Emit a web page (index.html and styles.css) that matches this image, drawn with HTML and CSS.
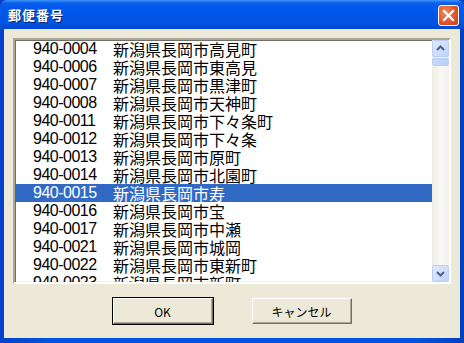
FILE: index.html
```html
<!DOCTYPE html>
<html lang="ja">
<head>
    <meta charset="UTF-8">
    <title>郵便番号</title>
    <link rel="stylesheet" href="styles.css">
</head>
<body>

<div class="window">
    <div class="titlebar">
        <span class="title">郵便番号</span>
        <span class="close-btn">
            <svg width="21" height="21" viewBox="0 0 21 21">
                <path d="M6 6 L15 15 M15 6 L6 15" stroke="#fff" stroke-width="2.2" stroke-linecap="square"/>
            </svg>
        </span>
    </div>

    <div class="client">
        <div class="listbox">
            <div class="items">
                <div class="item"><span class="code">940-0004</span><span class="addr">新潟県長岡市高見町</span></div>
                <div class="item"><span class="code">940-0006</span><span class="addr">新潟県長岡市東高見</span></div>
                <div class="item"><span class="code">940-0007</span><span class="addr">新潟県長岡市黒津町</span></div>
                <div class="item"><span class="code">940-0008</span><span class="addr">新潟県長岡市天神町</span></div>
                <div class="item"><span class="code">940-0011</span><span class="addr">新潟県長岡市下々条町</span></div>
                <div class="item"><span class="code">940-0012</span><span class="addr">新潟県長岡市下々条</span></div>
                <div class="item"><span class="code">940-0013</span><span class="addr">新潟県長岡市原町</span></div>
                <div class="item"><span class="code">940-0014</span><span class="addr">新潟県長岡市北園町</span></div>
                <div class="item selected"><span class="code">940-0015</span><span class="addr">新潟県長岡市寿</span></div>
                <div class="item"><span class="code">940-0016</span><span class="addr">新潟県長岡市宝</span></div>
                <div class="item"><span class="code">940-0017</span><span class="addr">新潟県長岡市中瀬</span></div>
                <div class="item"><span class="code">940-0021</span><span class="addr">新潟県長岡市城岡</span></div>
                <div class="item"><span class="code">940-0022</span><span class="addr">新潟県長岡市東新町</span></div>
                <div class="item"><span class="code">940-0023</span><span class="addr">新潟県長岡市新町</span></div>
            </div>
            <div class="scrollbar">
                <div class="sb-btn">
                    <svg width="15" height="15" viewBox="0 0 15 15">
                        <path d="M4 9 L7.5 5.5 L11 9" fill="none" stroke="#4d6185" stroke-width="2"/>
                    </svg>
                </div>
                <div class="sb-thumb"></div>
                <div class="sb-track"></div>
                <div class="sb-btn">
                    <svg width="15" height="15" viewBox="0 0 15 15">
                        <path d="M4 6 L7.5 9.5 L11 6" fill="none" stroke="#4d6185" stroke-width="2"/>
                    </svg>
                </div>
            </div>
        </div>

        <div class="buttons">
            <button class="btn default">OK</button>
            <button class="btn">キャンセル</button>
        </div>
    </div>
</div>

</body>
</html>
```

FILE: styles.css
```css
body {
    margin: 0;
    padding: 0;
    background-color: #0054e3;
    font-family: "Noto Sans CJK JP", "Liberation Sans", sans-serif;
}
.window {
    width: 464px;
    height: 343px;
    display: flex;
    flex-direction: column;
    background: linear-gradient(to right, #0840c8, #0054e3 10%, #0054e3 90%, #0040c0);
}
.titlebar {
    height: 29px;
    display: flex;
    align-items: center;
    justify-content: space-between;
    padding: 0 5px 0 8px;
    background: linear-gradient(to bottom, #3d95ff 0, #0a5ee8 3px, #0058ee 8px, #0054e3 22px, #0048d0 29px);
    border-radius: 7px 7px 0 0;
}
.title {
    color: white;
    font-size: 13px;
    font-weight: bold;
    text-shadow: 1px 1px 0 #0a1e6e;
    letter-spacing: 1px;
}
.close-btn {
    width: 21px;
    height: 21px;
    border: 1px solid white;
    border-radius: 3px;
    background: radial-gradient(circle at 35% 35%, #f08a60, #e0522a 60%, #c2391a);
    display: flex;
    box-sizing: border-box;
    align-items: center;
    justify-content: center;
    margin-top: 1px;
}
.close-btn svg {
    flex: none;
}
.client {
    flex: 1;
    margin: 0 4px 5px 4px;
    padding: 9px 9px 0 9px;
    background-color: #ece9d8;
}
.listbox {
    height: 246px;
    box-sizing: border-box;
    display: flex;
    border-style: solid;
    border-width: 2px;
    border-color: #aca899 #fff #fff #aca899;
    box-shadow: inset 1px 1px 0 #716f64, inset -1px -1px 0 #f1efe2;
    background-color: white;
}
.items {
    flex: 1;
    overflow: hidden;
}
.item {
    height: 18px;
    display: flex;
    align-items: center;
    padding-left: 18px;
    color: black;
    font-size: 16px;
    white-space: nowrap;
}
.item.selected {
    background-color: #316ac5;
    color: white;
}
.code {
    width: 80px;
    font-family: "Liberation Sans", sans-serif;
    letter-spacing: -0.5px;
}
.addr {
    font-family: "Noto Sans CJK JP", sans-serif;
    line-height: 18px;
}
.scrollbar {
    width: 17px;
    display: flex;
    flex-direction: column;
    background: linear-gradient(to right, #eeede5, #f8f8f4 50%, #f3f1ec);
}
.sb-btn {
    height: 17px;
    box-sizing: border-box;
    border: 1px solid #b9cdf5;
    border-radius: 2px;
    background: linear-gradient(to bottom right, #e0eafd, #c1d3fb);
    display: flex;
    align-items: center;
    justify-content: center;
}
.sb-thumb {
    height: 8px;
    margin-top: 1px;
    box-sizing: border-box;
    border: 1px solid #b9cdf5;
    border-radius: 2px;
    background: linear-gradient(to right, #c8d7fc, #bccffa);
}
.sb-track {
    flex: 1;
}
.buttons {
    display: flex;
    justify-content: center;
    gap: 39px;
    margin-top: 14px;
}
.btn {
    width: 100px;
    height: 26px;
    font-family: "Noto Sans CJK JP", sans-serif;
    font-size: 12px;
    color: black;
    background-color: #ece9d8;
    border-style: solid;
    border-width: 1px;
    border-color: #fff #716f64 #716f64 #fff;
    box-shadow: inset -1px -1px 0 #aca899;
    padding: 0;
}
.btn.default {
    outline: 1px solid black;
    outline-offset: 0;
}
```
